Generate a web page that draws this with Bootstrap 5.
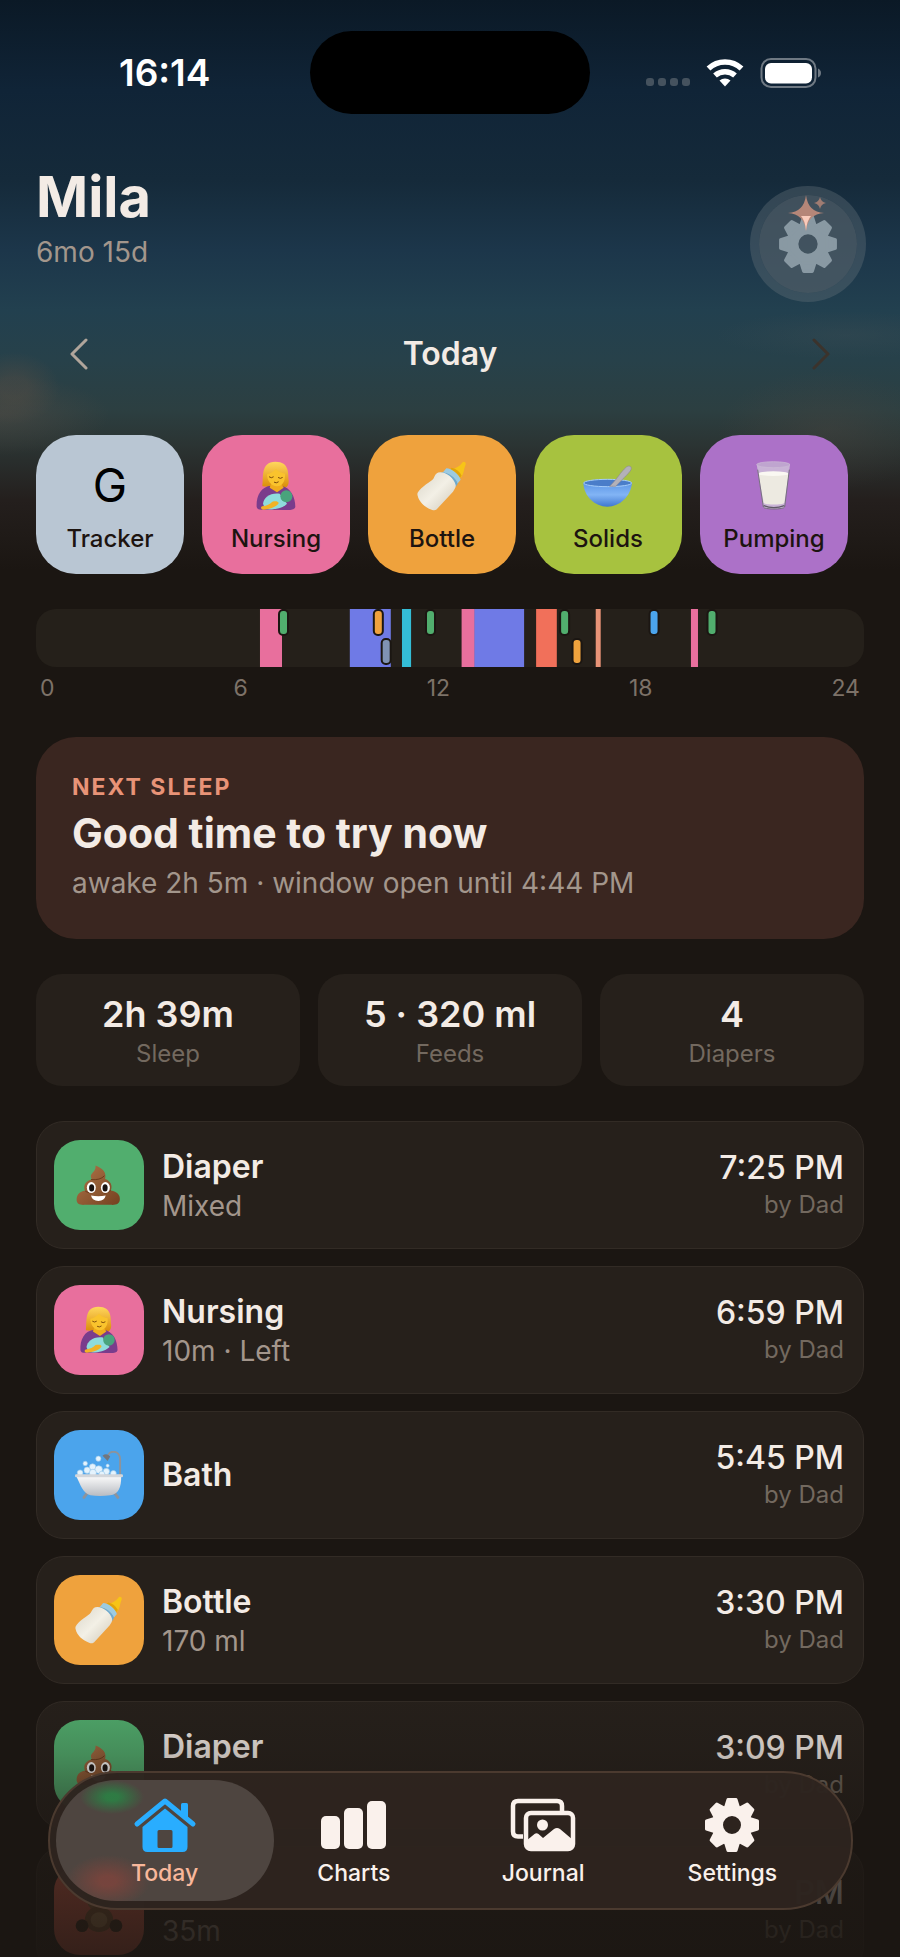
<!DOCTYPE html>
<html lang="en" data-bs-theme="dark">
<head>
<meta charset="utf-8">
<meta name="viewport" content="width=device-width, initial-scale=1">
<title>Mila · Today</title>
<link href="https://cdn.jsdelivr.net/npm/bootstrap@5.3.0/dist/css/bootstrap.min.css" rel="stylesheet">
<style>
  :root {
    --ink: #f3ebe5;
    --muted-ink: #a3968c;
    --faint-ink: #73695f;
    --page: #1b1612;
    --panel: #26201b;
  }
  body {
    font-family: Inter, "Liberation Sans", sans-serif;
    background: var(--page);
    color: var(--ink);
  }
  h1, h2, h3 { color: var(--ink); }
  .app-shell {
    background:
      radial-gradient(ellipse 110px 40px at 0 415px, rgba(84, 76, 68, .5), transparent),
      radial-gradient(ellipse 46px 36px at 14px 388px, rgba(84, 76, 68, .45) 30%, transparent),
      radial-gradient(ellipse 110px 60px at 92% 430px, rgba(76, 70, 64, .4), transparent),
      radial-gradient(ellipse 130px 24px at 94% 335px, rgba(62, 78, 84, .35), transparent),
      linear-gradient(#0b1926 0, #102437 90px, #152a3a 180px, #1c364a 250px, #22404f 310px, #27414a 360px, #2c3f41 410px, #2b3433 445px, #241f1d 500px, #1b1612 570px);
  }
  .sprite { width: 0; height: 0; }
  .status-bar { height: 145px; font-size: 37px; font-weight: 600; color: #fff; }
  .status-time { padding-left: 119px; }
  .status-icons { padding-right: 78px; gap: 16px; }
  .island { width: 280px; height: 83px; background: #000; }
  .page-x { padding-left: 36px; padding-right: 36px; }
  .page-head { padding-top: 22px; padding-right: 34px; }
  .child-name { font-size: 56px; line-height: 60px; font-weight: 700; }
  .child-age { font-size: 28px; line-height: 36px; color: var(--muted-ink); margin: 7px 0 32px; }
  .gear-btn {
    width: 116px; height: 116px; padding: 0;
    background: rgba(80, 94, 104, .72); background-clip: padding-box;
    border: 9px solid rgba(100, 112, 120, .38); border-radius: 50%;
    color: #8999a3;
  }
  .day-nav { height: 60px; margin-top: 22px; padding: 0 56px; }
  .day-nav h2 { font-size: 32px; line-height: 40px; font-weight: 600; }
  .day-nav button { width: 48px; height: 48px; color: #b0a59b; }
  .day-nav button:disabled { color: #3b332c; opacity: 1; }
  .sections { gap: 35px; padding-top: 51px; }
  .tiles { gap: 18px; }
  .tile {
    flex: 0 0 148px; height: 139px; padding: 26px 0 0; gap: 10px;
    border: 0; border-radius: 40px;
    color: #1d1410; font-size: 24px; line-height: 36px; font-weight: 500;
  }
  .glyph { width: 50px; height: 50px; }
  .glyph-letter { font-size: 46px; line-height: 48px; height: 50px; font-weight: 400; color: #000; }
  .bg-slate { background: #b9c6d3; }
  .bg-rose { background: #e86f9d; }
  .bg-amber { background: #efa23d; }
  .bg-lime { background: #a7c23f; }
  .bg-violet { background: #ac71c8; }
  .bg-leaf { background: #51ae6e; }
  .bg-azure { background: #4ba4ec; }
  .bg-coral { background: #e8644f; }
  .day-track { height: 58px; border-radius: 20px; background: #25201a; overflow: hidden; }
  .hours { font-size: 23px; line-height: 28px; padding: 0 4px; margin-top: 7px; color: #7d7268; }
  .next-sleep { background: #3a2620; border-radius: 40px; padding: 36px 36px 38px; gap: 8px; }
  .next-sleep .eyebrow { font-size: 23px; line-height: 28px; font-weight: 700; letter-spacing: 2px; color: #e89377; }
  .next-sleep h3 { font-size: 41px; line-height: 48px; font-weight: 700; }
  .next-sleep p { font-size: 28px; line-height: 36px; color: var(--muted-ink); }
  .stats { gap: 18px; }
  .stat { flex: 1 1 0; background: var(--panel); border-radius: 26px; padding: 20px 0 16px; gap: 4px; }
  .stat-value { font-size: 36px; line-height: 40px; font-weight: 600; }
  .stat-label { font-size: 24px; line-height: 32px; color: var(--faint-ink); }
  .log { gap: 17px; }
  .entry {
    background: var(--panel); border: 1px solid #322b25; border-radius: 28px;
    padding: 18px 19px 18px 17px; gap: 18px;
  }
  .entry-icon { width: 90px; height: 90px; border-radius: 26px; flex: none; }
  .entry-icon svg { width: 48px; height: 48px; }
  .entry-title { font-size: 32px; line-height: 42px; font-weight: 600; }
  .entry-note { font-size: 28px; line-height: 36px; color: var(--muted-ink); }
  .entry-time { font-size: 32px; line-height: 40px; font-weight: 500; }
  .entry-by { font-size: 24px; line-height: 34px; color: var(--faint-ink); }
  .fade-out {
    height: 270px;
    background: linear-gradient(rgba(27, 22, 18, 0), rgba(27, 22, 18, .22) 25%, rgba(27, 22, 18, .45) 42%, rgba(27, 22, 18, .76) 70%, rgba(27, 22, 18, .88));
    pointer-events: none;
  }
  .tab-bar {
    margin: 0 47px 47px 48px; height: 139px; padding: 0 24px 0 20px;
    background: rgba(45, 36, 31, .97); border: 2px solid #4b3a2f; border-radius: 70px;
  }
  .tab-link {
    flex: 1 1 0; color: #faf1ec; text-decoration: none; gap: 2px; padding-top: 24px;
    font-size: 23px; line-height: 36px; font-weight: 500;
  }
  .tab-link svg { height: 56px; width: 66px; }
  .tab-link > * { position: relative; }
  .tab-link.active { color: #f8b79b; }
  .tab-link.active::before {
    content: ""; position: absolute; inset: 7px -15px 7px -14px; border-radius: 61px;
    background:
      radial-gradient(ellipse 32px 17px at 56px 17px, rgba(45, 125, 68, .95) 20%, transparent),
      radial-gradient(ellipse 42px 26px at 52px 101px, rgba(124, 68, 60, .85) 20%, transparent),
      #4e4540;
  }
  .tab-link.active svg { color: #29adff; }
</style>
</head>
<body>

<svg class="sprite position-absolute" aria-hidden="true">
  <defs>
    <linearGradient id="hairFill" x1="0" y1="0" x2="0" y2="1"><stop offset="0" stop-color="#ffd75e"/><stop offset="1" stop-color="#d98a06"/></linearGradient>
    <linearGradient id="milkFill" x1="0" y1="0" x2="1" y2="1"><stop offset="0" stop-color="#d9d5c8"/><stop offset=".5" stop-color="#f3f0e6"/><stop offset="1" stop-color="#cfc8b8"/></linearGradient>
    <linearGradient id="bowlFill" x1="0" y1="0" x2="0" y2="1"><stop offset="0" stop-color="#5e97e6"/><stop offset=".5" stop-color="#82b4f5"/><stop offset="1" stop-color="#3f78cf"/></linearGradient>
    <linearGradient id="poopFill" x1="0" y1="0" x2="1" y2="1"><stop offset="0" stop-color="#b0764a"/><stop offset="1" stop-color="#74401f"/></linearGradient>
    <linearGradient id="tubFill" x1="0" y1="0" x2="0" y2="1"><stop offset="0" stop-color="#fbfbfb"/><stop offset="1" stop-color="#b9bcc2"/></linearGradient>

    <symbol id="e-nursing" viewBox="0 0 150 150">
      <path d="M34 76C38 50 28 2 73 2c44 0 38 38 40 56 1 14-4 20-12 24z" fill="url(#hairFill)"/>
      <path d="M17 138c-2-32 12-62 44-64h28c30 4 44 34 44 64-2 8-14 10-28 9L30 146c-8 0-12-3-13-8z" fill="#7a3c8c"/>
      <path d="M60 68h30l8 12-20 14-22-14z" fill="#f0ac1d"/>
      <path d="M48 40c10-2 20-8 27-16 8 10 18 12 27 14 2 18-6 38-24 38S48 58 48 40z" fill="#f9c32d"/>
      <path d="M55 48q6 5 12 0M82 50q6 5 12 0M70 64q6 4 12-1" fill="none" stroke="#7a4a0c" stroke-width="3" stroke-linecap="round"/>
      <path d="M36 128c2-18 22-34 50-30l22 30c-16 16-50 20-66 16z" fill="#8fdcdc"/>
      <circle cx="106" cy="106" r="18" fill="#49a37c"/>
      <path d="M34 136c14-2 22-6 30-14 8-2 18-2 19 4-2 8-20 18-46 20-8-1-9-8-3-10z" fill="#f2b226"/>
    </symbol>
    <symbol id="e-bottle" viewBox="0 0 150 150">
      <path d="M108 24c10-4 20-8 27-18 4-7 13-3 11 5-6 12-4 22-12 36l-8 4-24-20z" fill="#f7c417"/>
      <path d="M104 20q20 4 30 24l-6 7Q118 32 98 26z" fill="#e2a40a"/>
      <path d="M88 22c16 0 38 18 43 34l-10 12C114 50 94 36 76 36z" fill="#9ccbe2"/>
      <path d="M74 34c20 0 42 16 48 34l-6 10C106 56 88 42 68 42z" fill="#6da9cf"/>
      <path d="M70 34c18 0 42 18 46 38 1 8-3 12-8 20L62 142c-4 6-10 7-18 4-22-8-38-24-42-42-2-6 0-10 4-15 18-22 42-28 46-42 4-8 8-13 18-13z" fill="url(#milkFill)"/>
    </symbol>
    <symbol id="e-bowl" viewBox="0 0 150 150">
      <path d="M1 66c2 40 34 71 72 71s70-31 74-71z" fill="url(#bowlFill)"/>
      <ellipse cx="74" cy="66" rx="72" ry="11" fill="#4a7dc9" stroke="#a5cdfa" stroke-width="3"/>
      <path d="M80 76C104 52 112 34 130 18c8-6 18-2 14 8-4 10-34 36-46 50z" fill="#b3b1b8" stroke="#8d8a92" stroke-width="2"/>
    </symbol>
    <symbol id="e-milk" viewBox="0 0 150 150">
      <path d="M23 10 43 138c1 8 62 8 64 0L123 10z" fill="#c9b3d6"/>
      <path d="M28 38 44 126c6 6 56 6 62 0L119 38z" fill="#edeae1"/>
      <ellipse cx="73" cy="38" rx="45" ry="7" fill="#faf8f2"/>
      <path d="M26 26 43 138c1 8 62 8 64 0L121 26" fill="none" stroke="#77707f" stroke-width="3"/>
      <ellipse cx="73" cy="11" rx="50" ry="9" fill="#bfa5cf" stroke="#cdbdd6" stroke-width="2"/>
      <path d="M44 134q30 12 62 0" fill="none" stroke="#5f5866" stroke-width="4"/>
    </symbol>
    <symbol id="e-poop" viewBox="0 0 150 150">
      <path d="M64 14c20 8 36 20 30 42 18 6 24 20 18 36 20 4 30 14 28 30-2 12-10 16-28 15H30c-16 1-25-4-25-16 0-16 10-26 26-28-6-18 2-30 22-36-12-20 14-20 11-43z" fill="url(#poopFill)"/>
      <path d="M50 58c18 2 34-2 42-12M32 94c8 6 18 6 26 4M112 92c-6 6-14 8-22 8" fill="none" stroke="#6b3a1b" stroke-width="3"/>
      <ellipse cx="51" cy="83" rx="14" ry="17" fill="#fff"/><ellipse cx="95" cy="83" rx="14" ry="17" fill="#fff"/>
      <ellipse cx="52" cy="84" rx="8" ry="11" fill="#191210"/><ellipse cx="94" cy="84" rx="8" ry="11" fill="#191210"/>
      <path d="M50 108q23 5 46 0-4 17-23 17t-23-17z" fill="#fff"/>
    </symbol>
    <symbol id="e-bath" viewBox="0 0 150 150">
      <path d="M141 80V26c0-30-38-30-38-8" fill="none" stroke="#8e939b" stroke-width="6"/>
      <path d="M86 15q12-10 24 2l-8 14z" fill="#71767e"/>
      <path d="M38 132l-10 13M124 132l10 13" stroke="#8e939b" stroke-width="9" stroke-linecap="round"/>
      <g fill="#e4f3fd" stroke="#9cc9ea" stroke-width="2"><circle cx="32" cy="39" r="7"/><circle cx="73" cy="24" r="8"/><circle cx="102" cy="46" r="5"/><circle cx="55" cy="50" r="10"/><circle cx="38" cy="60" r="10"/><circle cx="74" cy="58" r="12"/><circle cx="98" cy="64" r="10"/><circle cx="56" cy="68" r="11"/><circle cx="16" cy="68" r="9"/><circle cx="120" cy="70" r="9"/><circle cx="84" cy="72" r="9"/></g>
      <path d="M4 78h140c2 36-10 58-34 60-20 3-44 3-62 0C26 134 16 104 4 78z" fill="url(#tubFill)"/>
      <rect x="0" y="73" width="150" height="9" rx="4" fill="#d3d6da"/>
    </symbol>
    <symbol id="e-bear" viewBox="0 0 150 150">
      <circle cx="40" cy="18" r="15" fill="#8a5a35"/><circle cx="110" cy="18" r="15" fill="#8a5a35"/>
      <circle cx="75" cy="42" r="38" fill="#9c6a40"/>
      <ellipse cx="75" cy="104" rx="44" ry="40" fill="#8a5a35"/><ellipse cx="75" cy="106" rx="26" ry="24" fill="#b98a58"/>
      <circle cx="22" cy="124" r="20" fill="#3e2a1b"/><circle cx="128" cy="124" r="20" fill="#3e2a1b"/>
    </symbol>
    <symbol id="i-gear" viewBox="-28 -28 56 56">
      <circle r="14.5" fill="none" stroke="currentColor" stroke-width="11"/>
      <g fill="currentColor" stroke="currentColor" stroke-width="3" stroke-linejoin="round">
        <path id="tooth" d="M-6.500-17.500-4-25.500H4L6.500-17.500z"/>
        <use href="#tooth" transform="rotate(45)"/><use href="#tooth" transform="rotate(90)"/><use href="#tooth" transform="rotate(135)"/><use href="#tooth" transform="rotate(180)"/><use href="#tooth" transform="rotate(225)"/><use href="#tooth" transform="rotate(270)"/><use href="#tooth" transform="rotate(315)"/>
      </g>
    </symbol>
  </defs>
</svg>

<div class="app-shell vh-100 overflow-hidden position-relative">
  <div class="status-bar d-flex align-items-center">
    <div class="status-time flex-fill w-25">16:14</div>
    <div class="island rounded-pill flex-shrink-0"></div>
    <div class="status-icons flex-fill w-25 d-flex align-items-center justify-content-end">
      <svg width="44" height="30" viewBox="0 0 44 30" fill="#45525e"><rect y="20" width="8" height="8" rx="3"/><rect x="12" y="20" width="8" height="8" rx="3"/><rect x="24" y="20" width="8" height="8" rx="3"/><rect x="36" y="20" width="8" height="8" rx="3"/></svg>
      <svg width="38" height="30" viewBox="0 0 38 30"><path d="M2.500 10.500a24 24 0 0 1 33 0" fill="none" stroke="#fff" stroke-width="5.500"/><path d="M9 17.500a15 15 0 0 1 20 0" fill="none" stroke="#fff" stroke-width="5.500"/><path d="M19 28.500l-5.500-6a8.500 8.500 0 0 1 11 0z" fill="#fff"/></svg>
      <svg width="62" height="30" viewBox="0 0 62 30"><rect x="1.500" y="1" width="54" height="28" rx="9.500" fill="none" stroke="#6f7983" stroke-width="2"/><rect x="5" y="5" width="47" height="20.500" rx="6" fill="#fff"/><path d="M58 10.500q3 1.500 3 4.500t-3 4.500z" fill="#6f7983"/></svg>
    </div>
  </div>

  <header class="page-x page-head d-flex justify-content-between align-items-end">
    <div>
      <h1 class="child-name mb-0">Mila</h1>
      <p class="child-age">6mo 15d</p>
    </div>
    <button type="button" class="gear-btn" aria-label="Quick settings">
      <svg width="98" height="98" viewBox="-49 -49 98 98">
        <use href="#i-gear" x="-30" y="-30" width="60" height="60"/>
        <path d="M-2-49Q0-32 16-31 0-30-2-13-4-30-20-31-4-32-2-49z" fill="#b58678"/>
        <path d="M-7-28H3Q-1-24-2-13-3-24-7-28z" fill="#f9cbbb"/>
        <path d="M12-47q1 5 6 6-5 1-6 6-1-5-6-6 5-1 6-6z" fill="#a07c72"/>
      </svg>
    </button>
  </header>

  <nav class="day-nav d-flex align-items-center justify-content-between" aria-label="Day">
    <button type="button" class="btn p-0 border-0" aria-label="Previous day"><svg width="20" height="32" viewBox="0 0 20 32" fill="none" stroke="currentColor" stroke-width="3" stroke-linecap="round" stroke-linejoin="round"><path d="M16 2 2 16l14 14"/></svg></button>
    <h2 class="mb-0">Today</h2>
    <button type="button" class="btn p-0 border-0" aria-label="Next day" disabled><svg width="20" height="32" viewBox="0 0 20 32" fill="none" stroke="currentColor" stroke-width="3" stroke-linecap="round" stroke-linejoin="round"><path d="M4 2l14 14L4 30"/></svg></button>
  </nav>

  <main class="sections page-x d-flex flex-column">
    <div class="tiles d-flex">
      <button type="button" class="tile bg-slate d-flex flex-column align-items-center"><span class="glyph-letter">G</span><span>Tracker</span></button>
      <button type="button" class="tile bg-rose d-flex flex-column align-items-center"><svg class="glyph"><use href="#e-nursing"/></svg><span>Nursing</span></button>
      <button type="button" class="tile bg-amber d-flex flex-column align-items-center"><svg class="glyph"><use href="#e-bottle"/></svg><span>Bottle</span></button>
      <button type="button" class="tile bg-lime d-flex flex-column align-items-center"><svg class="glyph"><use href="#e-bowl"/></svg><span>Solids</span></button>
      <button type="button" class="tile bg-violet d-flex flex-column align-items-center"><svg class="glyph"><use href="#e-milk"/></svg><span>Pumping</span></button>
    </div>

    <section aria-label="Day timeline">
      <div class="day-track">
        <svg class="d-block w-100 h-100" role="img" aria-label="Events over 24 hours">
          <rect x="27.05%" width="2.66%" height="58" fill="#e86f9d"/>
          <rect x="37.9%" width="4.95%" height="58" fill="#6f7ae6"/>
          <rect x="44.2%" width="1.1%" height="58" fill="#34bdd6"/>
          <rect x="51.4%" width="1.6%" height="58" fill="#e86f9d"/>
          <rect x="52.95%" width="6%" height="58" fill="#6f7ae6"/>
          <rect x="60.4%" width="2.5%" height="58" fill="#f1705a"/>
          <rect x="67.6%" width=".6%" height="58" fill="#e89377"/>
          <rect x="79.1%" width=".85%" height="58" fill="#e86f9d"/>
          <g stroke="#1b1612" stroke-width="2">
            <rect x="29.35%" y="1" width="9" height="25" rx="4" fill="#51ae6e"/>
            <rect x="40.8%" y="1" width="9" height="25" rx="4" fill="#efa23d"/>
            <rect x="41.75%" y="30" width="9" height="25" rx="4" fill="#7f92b4"/>
            <rect x="47.1%" y="1" width="9" height="25" rx="4" fill="#51ae6e"/>
            <rect x="63.3%" y="1" width="9" height="25" rx="4" fill="#51ae6e"/>
            <rect x="64.8%" y="30" width="9" height="25" rx="4" fill="#efa23d"/>
            <rect x="74.1%" y="1" width="9" height="25" rx="4" fill="#4ba4ec"/>
            <rect x="81.1%" y="1" width="9" height="25" rx="4" fill="#51ae6e"/>
          </g>
        </svg>
      </div>
      <div class="hours d-flex justify-content-between"><span>0</span><span>6</span><span>12</span><span>18</span><span>24</span></div>
    </section>

    <section class="next-sleep d-flex flex-column">
      <div class="eyebrow">NEXT SLEEP</div>
      <h3 class="mb-0">Good time to try now</h3>
      <p class="mb-0">awake 2h 5m · window open until 4:44 PM</p>
    </section>

    <section class="stats d-flex text-center" aria-label="Totals">
      <div class="stat d-flex flex-column"><span class="stat-value">2h 39m</span><span class="stat-label">Sleep</span></div>
      <div class="stat d-flex flex-column"><span class="stat-value">5 · 320 ml</span><span class="stat-label">Feeds</span></div>
      <div class="stat d-flex flex-column"><span class="stat-value">4</span><span class="stat-label">Diapers</span></div>
    </section>

    <ul class="log list-unstyled d-flex flex-column mb-0">
      <li class="entry d-flex align-items-center">
        <span class="entry-icon bg-leaf d-flex align-items-center justify-content-center"><svg><use href="#e-poop"/></svg></span>
        <div class="flex-fill"><div class="entry-title">Diaper</div><div class="entry-note">Mixed</div></div>
        <div class="text-end"><div class="entry-time">7:25 PM</div><div class="entry-by">by Dad</div></div>
      </li>
      <li class="entry d-flex align-items-center">
        <span class="entry-icon bg-rose d-flex align-items-center justify-content-center"><svg><use href="#e-nursing"/></svg></span>
        <div class="flex-fill"><div class="entry-title">Nursing</div><div class="entry-note">10m · Left</div></div>
        <div class="text-end"><div class="entry-time">6:59 PM</div><div class="entry-by">by Dad</div></div>
      </li>
      <li class="entry d-flex align-items-center">
        <span class="entry-icon bg-azure d-flex align-items-center justify-content-center"><svg><use href="#e-bath"/></svg></span>
        <div class="flex-fill"><div class="entry-title">Bath</div></div>
        <div class="text-end"><div class="entry-time">5:45 PM</div><div class="entry-by">by Dad</div></div>
      </li>
      <li class="entry d-flex align-items-center">
        <span class="entry-icon bg-amber d-flex align-items-center justify-content-center"><svg><use href="#e-bottle"/></svg></span>
        <div class="flex-fill"><div class="entry-title">Bottle</div><div class="entry-note">170 ml</div></div>
        <div class="text-end"><div class="entry-time">3:30 PM</div><div class="entry-by">by Dad</div></div>
      </li>
      <li class="entry d-flex align-items-center">
        <span class="entry-icon bg-leaf d-flex align-items-center justify-content-center"><svg><use href="#e-poop"/></svg></span>
        <div class="flex-fill"><div class="entry-title">Diaper</div><div class="entry-note">&nbsp;</div></div>
        <div class="text-end"><div class="entry-time">3:09 PM</div><div class="entry-by">by Dad</div></div>
      </li>
      <li class="entry d-flex align-items-center">
        <span class="entry-icon bg-coral d-flex align-items-center justify-content-center"><svg><use href="#e-bear"/></svg></span>
        <div class="flex-fill"><div class="entry-title">&nbsp;</div><div class="entry-note">35m</div></div>
        <div class="text-end"><div class="entry-time">PM</div><div class="entry-by">by Dad</div></div>
      </li>
    </ul>
  </main>

  <div class="fade-out position-absolute bottom-0 start-0 end-0"></div>

  <nav class="tab-bar position-absolute bottom-0 start-0 end-0 d-flex" aria-label="Main">
    <a href="#today" class="tab-link active position-relative d-flex flex-column align-items-center" aria-current="page">
      <svg viewBox="0 0 66 56" fill="currentColor"><path d="M5 27 33 4l28 23" fill="none" stroke="currentColor" stroke-width="5" stroke-linecap="round" stroke-linejoin="round"/><path d="M49 7.500q0-1.500 1.500-1.500h4q1.500 0 1.500 1.500V22l-7-6z"/><path fill-rule="evenodd" d="M33 11.500 55.500 30v20q0 5-5 5h-35q-5 0-5-5V30zM27 33q-1.500 0-1.500 1.500v15q0 1.500 1.500 1.500h12q1.500 0 1.500-1.500v-15q0-1.500-1.500-1.500z"/></svg>
      <span>Today</span>
    </a>
    <a href="#charts" class="tab-link d-flex flex-column align-items-center">
      <svg viewBox="0 0 66 56" fill="currentColor"><rect y="19" width="19" height="33" rx="5"/><rect x="23" y="11" width="19" height="41" rx="5"/><rect x="46" y="4" width="19" height="48" rx="5"/></svg>
      <span>Charts</span>
    </a>
    <a href="#journal" class="tab-link d-flex flex-column align-items-center">
      <svg viewBox="0 0 66 56" fill="none" stroke="currentColor" stroke-width="4.500" stroke-linejoin="round"><path d="M13 39.500H8q-5 0-5-5V9q0-5 5-5h39q5 0 5 5v5"/><rect x="16" y="16" width="47" height="36" rx="5"/><circle cx="32.500" cy="28" r="5.500" fill="currentColor" stroke="none"/><path d="M16 44l8.500-7q2-1.500 4 0l4.500 4 11-9q3-2 6 0l13 11v9H16z" fill="currentColor" stroke="none"/></svg>
      <span>Journal</span>
    </a>
    <a href="#settings" class="tab-link d-flex flex-column align-items-center">
      <svg><use href="#i-gear"/></svg>
      <span>Settings</span>
    </a>
  </nav>
</div>

<script src="https://cdn.jsdelivr.net/npm/bootstrap@5.3.0/dist/js/bootstrap.bundle.min.js"></script>
</body>
</html>
